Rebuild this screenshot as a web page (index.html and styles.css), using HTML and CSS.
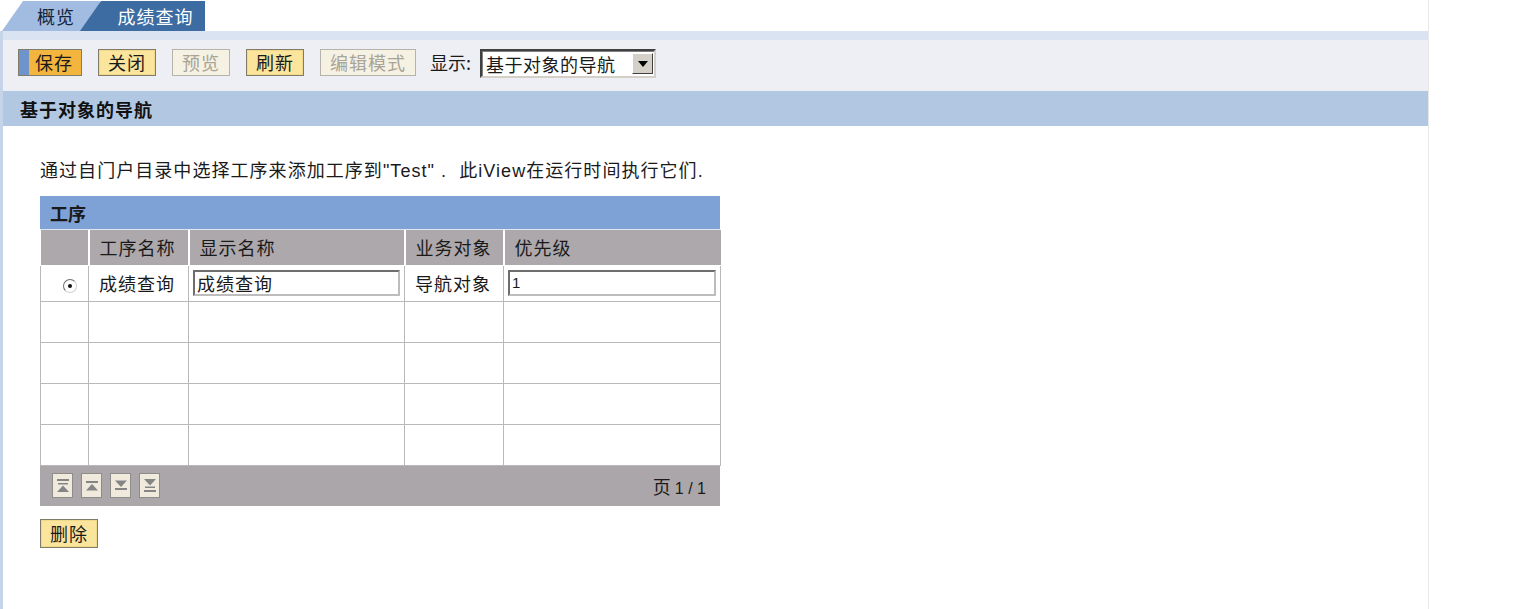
FILE: index.html
```html
<!DOCTYPE html>
<html lang="zh">
<head>
<meta charset="utf-8">
<title>成绩查询</title>
<link rel="stylesheet" href="styles.css">
</head>
<body>
<div class="page">
  <div class="tabs">
    <div class="tab tab-light">概览</div>
    <div class="tab tab-dark">成绩查询</div>
  </div>
  <div class="band"></div>
  <div class="toolbar">
    <button class="btn btn-save">保存</button>
    <button class="btn">关闭</button>
    <button class="btn btn-disabled">预览</button>
    <button class="btn">刷新</button>
    <button class="btn btn-disabled">编辑模式</button>
    <span class="show-label">显示:</span>
    <div class="select">
      <span class="select-text">基于对象的导航</span>
      <span class="select-arrow"><svg width="10" height="6" viewBox="0 0 10 6"><path d="M0 0H10L5 6Z" fill="#000"/></svg></span>
    </div>
  </div>
  <div class="section-head">基于对象的导航</div>
  <div class="content">
    <p class="desc">通过自门户目录中选择工序来添加工序到<span class="lat">"Test" .&nbsp; </span>此<span class="lat">iView</span>在运行时间执行它们<span class="lat">.</span></p>
    <div class="grid">
      <div class="grid-title">工序</div>
      <table class="tbl">
        <colgroup>
          <col class="c1"><col class="c2"><col class="c3"><col class="c4"><col class="c5">
        </colgroup>
        <thead>
          <tr><th></th><th>工序名称</th><th>显示名称</th><th>业务对象</th><th>优先级</th></tr>
        </thead>
        <tbody>
          <tr class="first">
            <td class="rad"><span class="radio"></span></td>
            <td>成绩查询</td>
            <td><div class="input">成绩查询</div></td>
            <td>导航对象</td>
            <td><div class="input lat">1</div></td>
          </tr>
          <tr><td></td><td></td><td></td><td></td><td></td></tr>
          <tr><td></td><td></td><td></td><td></td><td></td></tr>
          <tr><td></td><td></td><td></td><td></td><td></td></tr>
          <tr><td></td><td></td><td></td><td></td><td></td></tr>
        </tbody>
      </table>
      <div class="grid-foot">
        <div class="navs">
          <span class="nav"><svg width="14" height="15" viewBox="0 0 14 15"><rect x="1" y="1" width="12" height="2" fill="#858585"/><rect x="2" y="5" width="10" height="1.5" fill="#858585"/><path d="M7 7.5L13 14H1Z" fill="#858585"/></svg></span>
          <span class="nav"><svg width="14" height="15" viewBox="0 0 14 15"><rect x="1" y="3" width="12" height="2" fill="#858585"/><path d="M7 6L13 12.5H1Z" fill="#858585"/></svg></span>
          <span class="nav"><svg width="14" height="15" viewBox="0 0 14 15"><path d="M1 2.5H13L7 9Z" fill="#858585"/><rect x="1" y="10" width="12" height="2" fill="#858585"/></svg></span>
          <span class="nav"><svg width="14" height="15" viewBox="0 0 14 15"><path d="M1 1H13L7 7.5Z" fill="#858585"/><rect x="2" y="8.5" width="10" height="1.5" fill="#858585"/><rect x="1" y="12" width="12" height="2" fill="#858585"/></svg></span>
        </div>
        <div class="pager">页 <span class="lat">1 / 1</span></div>
      </div>
    </div>
    <button class="btn btn-del">删除</button>
  </div>
</div>
</body>
</html>
```
FILE: styles.css
```css
html, body {
  margin: 0;
  padding: 0;
  background: #ffffff;
}
body {
  font-family: "Noto Sans CJK SC", "Liberation Sans", sans-serif;
  font-size: 18px;
  color: #1a1a1a;
}
.lat {
  font-family: "Liberation Sans", "Noto Sans CJK SC", sans-serif;
}
.page {
  width: 1429px;
  height: 609px;
  border-right: 1px solid #e8e8e8;
  display: flex;
  flex-direction: column;
  box-sizing: border-box;
}
.tabs {
  display: flex;
  height: 31px;
  padding-left: 2px;
  align-items: stretch;
  background: #ffffff;
}
.tab {
  display: flex;
  align-items: center;
  justify-content: center;
  font-size: 18px;
  line-height: 1;
  padding-top: 1px;
  box-sizing: border-box;
  letter-spacing: 1px;
}
.tab-light {
  width: 98px;
  background: #a1bce0;
  color: #15243a;
  clip-path: polygon(21px 1px, 100% 1px, 100% 100%, 0 100%);
  padding-left: 10px;
}
.tab-dark {
  width: 125px;
  margin-left: -20px;
  background: #3d6ca3;
  color: #ffffff;
  clip-path: polygon(21px 1px, 100% 1px, 100% 100%, 0 100%);
  padding-left: 26px;
}
.band {
  height: 9px;
  background: #d9e3f1;
  border-left: 3px solid #c6d4e9;
}
.toolbar {
  height: 51px;
  background: #edeff5;
  border-left: 3px solid #c6d4e9;
  display: flex;
  align-items: flex-start;
  padding-left: 15px;
  padding-top: 9px;
  box-sizing: border-box;
}
.btn {
  font-family: "Noto Sans CJK SC", sans-serif;
  font-size: 18px;
  line-height: 23px;
  height: 27px;
  padding: 0 9px;
  margin: 0 16px 0 0;
  background: #fbe49c;
  border: 1px solid #7f7c6c;
  box-shadow: inset 0 0 0 1px #f2d98a;
  color: #1a1a1a;
  letter-spacing: 1px;
  box-sizing: border-box;
}
.btn-save {
  background: linear-gradient(to right, #6f94cb 0, #6f94cb 10px, #f4b53e 10px);
  padding-left: 16px;
  padding-right: 8px;
  box-shadow: none;
}
.btn-disabled {
  background: #f6f2e3;
  border-color: #b6b4aa;
  color: #a8a498;
  box-shadow: none;
}
.show-label {
  font-size: 18px;
  line-height: 27px;
  margin-left: -2px;
  margin-right: 9px;
  letter-spacing: 0;
}
.select {
  display: flex;
  align-items: center;
  width: 176px;
  height: 29px;
  background: #ffffff;
  border: 2px solid;
  border-color: #404040 #d4d0c8 #d4d0c8 #404040;
  box-shadow: inset 1px 1px 0 #808080;
  box-sizing: border-box;
  margin-top: 0;
}
.select-text {
  flex: 1;
  padding-left: 4px;
  font-size: 18px;
  line-height: 1;
  letter-spacing: 0.5px;
}
.select-arrow {
  width: 21px;
  height: 21px;
  margin-right: 1px;
  background: #d4d0c8;
  border: 1px solid;
  border-color: #ffffff #404040 #404040 #ffffff;
  display: flex;
  align-items: center;
  justify-content: center;
  box-sizing: border-box;
}
.section-head {
  height: 35px;
  background: #b2c7e1;
  border-left: 3px solid #c6d4e9;
  display: flex;
  align-items: center;
  padding-left: 17px;
  font-weight: bold;
  font-size: 18px;
  color: #111;
  box-sizing: border-box;
  letter-spacing: 1px;
}
.content {
  flex: 1;
  border-left: 3px solid #c6d4e9;
  padding-left: 37px;
  padding-top: 30px;
}
.desc {
  margin: 0 0 12px 0;
  font-size: 18px;
  line-height: 26px;
  letter-spacing: 1.05px;
}
.grid {
  width: 680px;
}
.grid-title {
  height: 34px;
  background: #7fa2d6;
  display: flex;
  align-items: center;
  padding-left: 10px;
  font-weight: bold;
  font-size: 18px;
  border-bottom: 1px solid #dfe6f0;
  box-sizing: border-box;
}
.tbl {
  width: 680px;
  border-collapse: collapse;
  table-layout: fixed;
}
.c1 { width: 48px; }
.c2 { width: 100px; }
.c3 { width: 216px; }
.c4 { width: 99px; }
.c5 { width: 217px; }
.tbl th {
  height: 35px;
  background: #aca8ab;
  font-weight: normal;
  text-align: left;
  padding: 0 0 0 10px;
  font-size: 18px;
  border-left: 2px solid #ffffff;
  border-bottom: 1px solid #ffffff;
  box-sizing: border-box;
  letter-spacing: 1px;
}
.tbl th:first-child { border-left: none; }
.tbl td {
  height: 41px;
  border: 1px solid #b9b9b9;
  padding: 0 0 0 10px;
  font-size: 18px;
  box-sizing: border-box;
  letter-spacing: 1px;
}
.tbl tr.first td {
  height: 36px;
  padding-left: 10px;
}
.tbl tr.first td:nth-child(3),
.tbl tr.first td:nth-child(5) {
  padding: 0 4px;
}
.tbl td.rad {
  padding: 0;
  text-align: center;
}
.radio {
  display: inline-block;
  width: 14px;
  height: 14px;
  border-radius: 50%;
  border: 1px solid #6f6f6f;
  border-right-color: #d0d0d0;
  border-bottom-color: #d0d0d0;
  box-sizing: border-box;
  position: relative;
  vertical-align: middle;
  background: #fff;
}
.radio::after {
  content: "";
  position: absolute;
  left: 4px;
  top: 4px;
  width: 4px;
  height: 4px;
  border-radius: 50%;
  background: #111;
}
.input {
  height: 26px;
  border: 2px solid;
  border-color: #6e6e6e #bdbdbd #bdbdbd #6e6e6e;
  background: #fff;
  box-sizing: border-box;
  padding-left: 2px;
  font-size: 18px;
  line-height: 22px;
}
.input.lat {
  font-size: 15px;
}
.grid-foot {
  height: 40px;
  background: #aaa6a9;
  display: flex;
  align-items: center;
  justify-content: space-between;
  padding: 0 14px 0 12px;
  box-sizing: border-box;
}
.navs {
  display: flex;
  gap: 8px;
}
.nav {
  width: 21px;
  height: 25px;
  background: #efeadb;
  border: 1px solid #8e8c88;
  box-sizing: border-box;
  display: flex;
  align-items: center;
  justify-content: center;
}
.pager {
  font-size: 18px;
}
.pager .lat {
  font-size: 16px;
}
.btn-del {
  margin-top: 13px;
  height: 29px;
  padding: 0 9px;
}
```
